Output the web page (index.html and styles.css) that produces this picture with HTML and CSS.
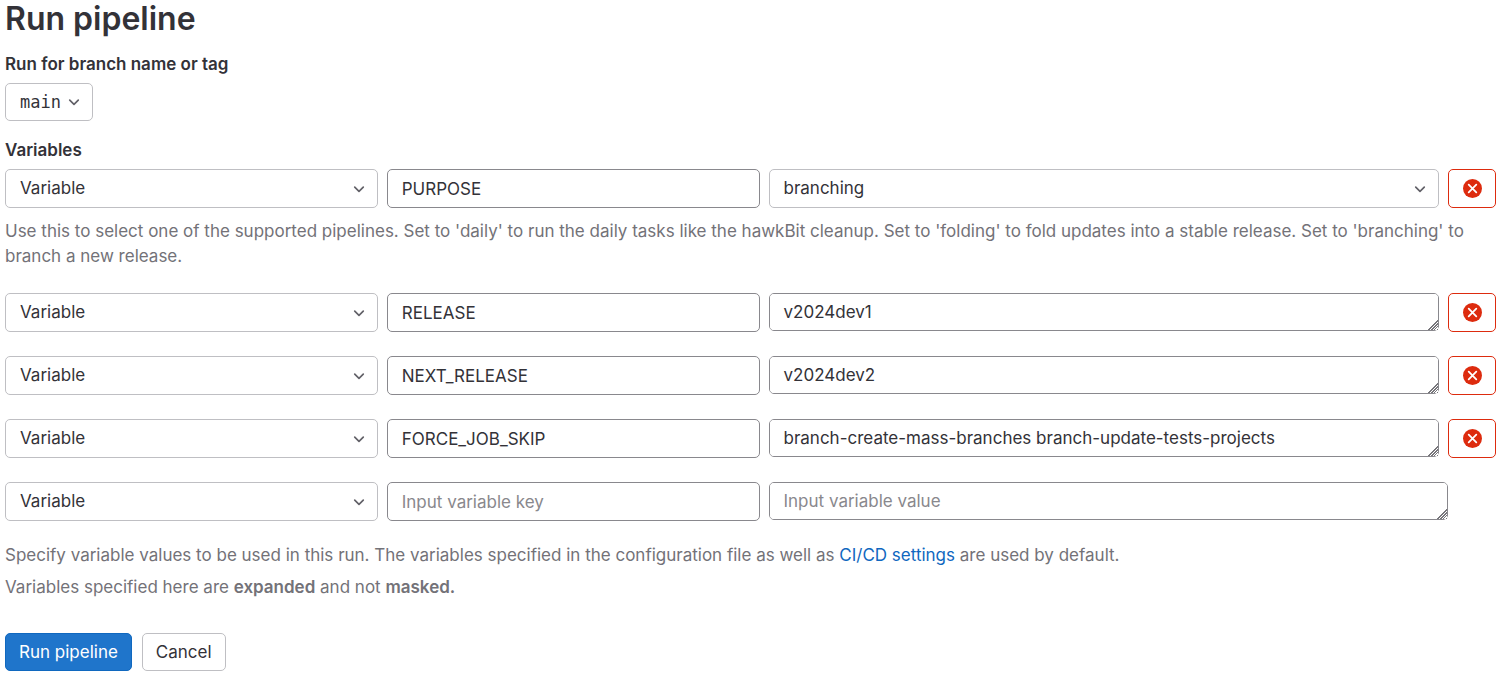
FILE: index.html
```html
<!DOCTYPE html>
<html lang="en">
<head>
<meta charset="utf-8">
<title>Run pipeline</title>
<link rel="stylesheet" href="styles.css">
</head>
<body>
<svg class="sprite" aria-hidden="true">
  <symbol id="chevron" viewBox="0 0 16 16"><path d="M4.2 6.4 8 10.1 11.8 6.4" fill="none" stroke="currentColor" stroke-width="1.5" stroke-linecap="round" stroke-linejoin="round"/></symbol>
  <symbol id="clear" viewBox="0 0 16 16"><circle cx="8" cy="8" r="8" fill="currentColor"/><path d="M4.8 4.8 11.2 11.2M11.2 4.8 4.8 11.2" stroke="#fff" stroke-width="1.5" stroke-linecap="round"/></symbol>
</svg>
<main class="page">
  <h1 class="title">Run pipeline</h1>
  <form class="form">
    <section class="group">
      <label class="label" for="ref">Run for branch name or tag</label>
      <div class="picker picker-ref">
        <select class="select select-ref" id="ref"><option>main</option></select>
        <svg class="chevron"><use href="#chevron"/></svg>
      </div>
    </section>
    <fieldset class="group variables">
      <legend class="label">Variables</legend>
      <div class="rows">
        <div>
          <div class="row">
            <div class="picker picker-type"><select class="select" aria-label="Type"><option>Variable</option></select><svg class="chevron"><use href="#chevron"/></svg></div>
            <input class="field key" aria-label="Key" value="PURPOSE">
            <div class="picker value"><select class="select" aria-label="Value"><option>branching</option></select><svg class="chevron"><use href="#chevron"/></svg></div>
            <button class="remove" type="button" aria-label="Remove variable"><svg class="clear"><use href="#clear"/></svg></button>
          </div>
          <p class="help">Use this to select one of the supported pipelines. Set to 'daily' to run the daily tasks like the hawkBit cleanup. Set to 'folding' to fold updates into a stable release. Set to 'branching' to branch a new release.</p>
        </div>
        <div class="row">
          <div class="picker picker-type"><select class="select" aria-label="Type"><option>Variable</option></select><svg class="chevron"><use href="#chevron"/></svg></div>
          <input class="field key" aria-label="Key" value="RELEASE">
          <textarea class="field value area" aria-label="Value" rows="1">v2024dev1</textarea>
          <button class="remove" type="button" aria-label="Remove variable"><svg class="clear"><use href="#clear"/></svg></button>
        </div>
        <div class="row">
          <div class="picker picker-type"><select class="select" aria-label="Type"><option>Variable</option></select><svg class="chevron"><use href="#chevron"/></svg></div>
          <input class="field key" aria-label="Key" value="NEXT_RELEASE">
          <textarea class="field value area" aria-label="Value" rows="1">v2024dev2</textarea>
          <button class="remove" type="button" aria-label="Remove variable"><svg class="clear"><use href="#clear"/></svg></button>
        </div>
        <div class="row">
          <div class="picker picker-type"><select class="select" aria-label="Type"><option>Variable</option></select><svg class="chevron"><use href="#chevron"/></svg></div>
          <input class="field key" aria-label="Key" value="FORCE_JOB_SKIP">
          <textarea class="field value area" aria-label="Value" rows="1">branch-create-mass-branches branch-update-tests-projects</textarea>
          <button class="remove" type="button" aria-label="Remove variable"><svg class="clear"><use href="#clear"/></svg></button>
        </div>
        <div class="row row-new">
          <div class="picker picker-type"><select class="select" aria-label="Type"><option>Variable</option></select><svg class="chevron"><use href="#chevron"/></svg></div>
          <input class="field key" aria-label="Key" placeholder="Input variable key">
          <textarea class="field value area" aria-label="Value" rows="1" placeholder="Input variable value"></textarea>
        </div>
      </div>
    </fieldset>
    <div class="notes">
      <p class="note">Specify variable values to be used in this run. The variables specified in the configuration file as well as <a class="link" href="#">CI/CD settings</a> are used by default.</p>
      <p class="note">Variables specified here are <b>expanded</b> and not <b>masked.</b></p>
    </div>
    <div class="actions">
      <button class="button button-primary" type="submit">Run pipeline</button>
      <button class="button" type="button">Cancel</button>
    </div>
  </form>
</main>
</body>
</html>
```
FILE: styles.css
```css
* { box-sizing: border-box; }
body {
  margin: 0;
  background: #fff;
  color: #333238;
  font: 17px/25px Inter, "Noto Sans", sans-serif;
}
.sprite { position: absolute; width: 0; height: 0; }
.page { padding: 0 5px 5px; }
.title { margin: 0; font-size: 32px; line-height: 37px; font-weight: 600; }
.form { padding-top: 15px; }
.label { display: block; padding: 0; margin-bottom: 6px; font-weight: 600; }
.variables { border: 0; padding: 0; margin: 17px 0 0; min-width: 0; }
.rows { display: flex; flex-direction: column; gap: 24px; }
.row { display: flex; gap: 9px; }
.row-new { padding-right: 48px; }
.picker { display: grid; align-items: center; }
.picker-type, .key { flex: none; width: calc((100vw - 10px) / 4); }
.value { flex: 1; min-width: 0; }
.select, .field, .button, .remove {
  margin: 0;
  color: #333238;
  background: #fff;
  border: 1px solid #bfbfc3;
  border-radius: 5px;
  font: inherit;
}
.select {
  grid-area: 1 / 1;
  appearance: none;
  width: 100%;
  height: 39px;
  padding: 0 40px 0 14px;
}
.picker-ref { width: max-content; }
.select-ref { height: 38px; padding-right: 31px; font-family: "DejaVu Sans Mono", monospace; }
.chevron {
  grid-area: 1 / 1;
  justify-self: end;
  width: 18px;
  height: 18px;
  margin-right: 10px;
  color: #626168;
  pointer-events: none;
}
.field { height: 39px; padding: 0 14px; border-color: #89888d; }
.field::placeholder { color: #89888d; opacity: 1; }
.area { display: block; height: 38px; padding: 6px 14px; resize: vertical; overflow: auto; }
.area::-webkit-resizer {
  background:
    linear-gradient(135deg, #fff 64%, transparent 64%),
    repeating-linear-gradient(135deg, #77767b 0 1px, #fff 1px 2px);
}
.remove {
  display: grid;
  place-items: center;
  width: 48px;
  height: 39px;
  padding: 0;
  color: #dd2b0e;
  border-color: #dd2b0e;
}
.clear { width: 19px; height: 19px; }
.help { margin: 11px 0 0; color: #737278; }
.notes { display: flex; flex-direction: column; gap: 7px; margin-top: 22px; color: #737278; }
.note { margin: 0; }
.note b { font-weight: 600; }
.link { color: #1068bf; text-decoration: none; }
.actions { display: flex; gap: 10px; margin-top: 33px; }
.button { height: 38px; padding: 0 13px; }
.button-primary { color: #fff; background: #1f75cb; border-color: #1068bf; }
```
